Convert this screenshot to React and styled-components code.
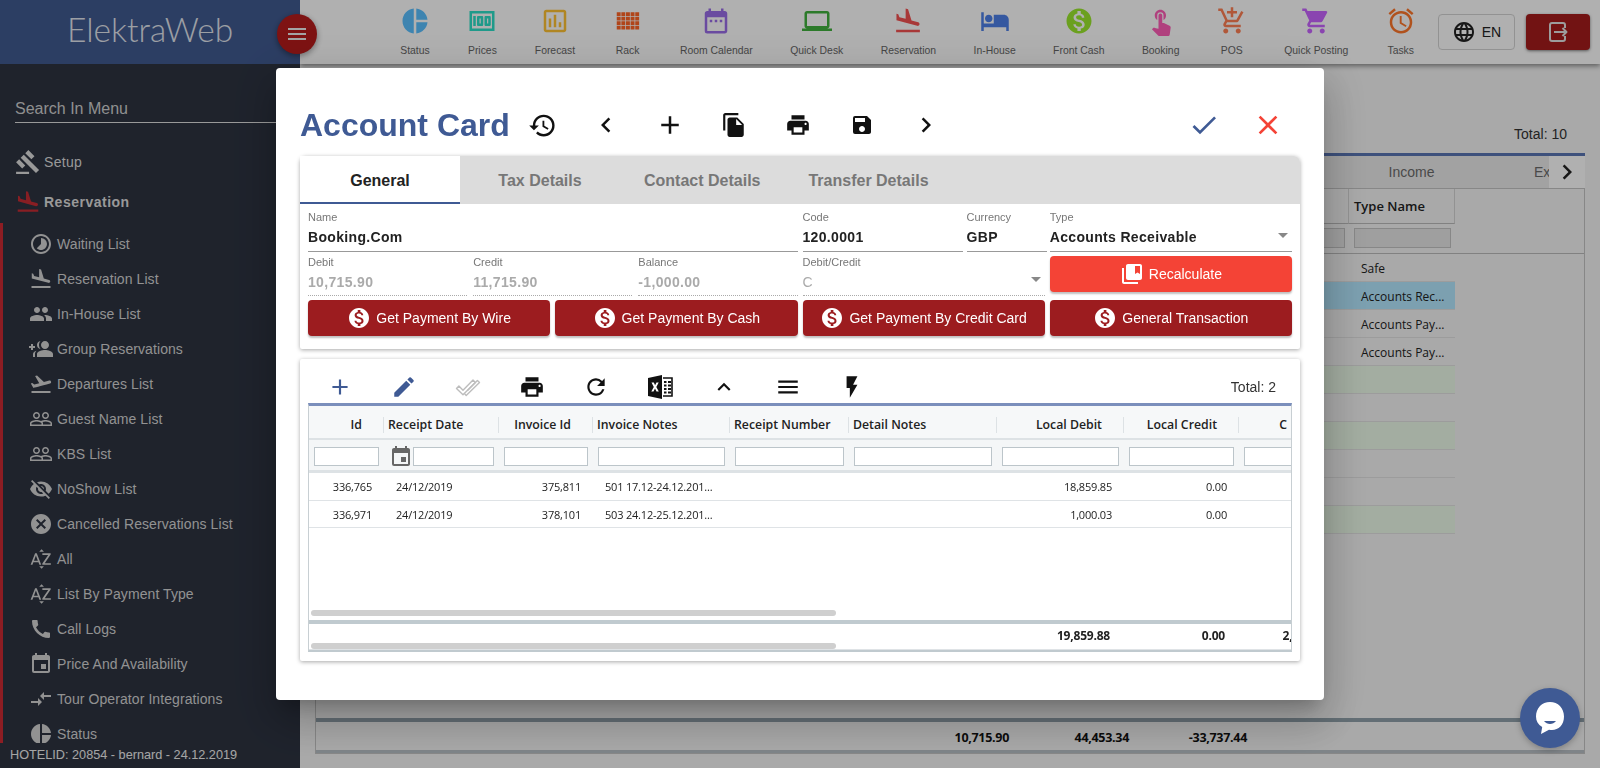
import styled, { createGlobalStyle } from 'styled-components';
import {
    MdHistory, MdChevronLeft, MdChevronRight, MdAdd, MdFileCopy, MdPrint, MdSave, MdCheck, MdClose,
    MdMonetizationOn, MdCollectionsBookmark, MdEdit, MdRefresh, MdKeyboardArrowUp, MdMenu, MdFlashOn, MdEvent,
    MdGavel, MdFlightLand, MdTimelapse, MdPeople, MdGroupAdd, MdFlightTakeoff, MdPeopleOutline, MdVisibilityOff,
    MdCancel, MdSortByAlpha, MdCall, MdCompareArrows, MdPieChart, MdMoney, MdOutlineAssessment,
    MdDateRange, MdLaptop, MdHotel, MdTouchApp, MdAddShoppingCart, MdShoppingCart, MdAccessAlarm, MdLanguage,
} from 'react-icons/md';

const GlobalStyle = createGlobalStyle`
    html, body { margin: 0; padding: 0; height: 100%; overflow: hidden; }
    body { font-family: "Liberation Sans", Arial, sans-serif; background: #f5f5f5; }
    * { box-sizing: border-box; }
`;

const MirroredGroupAdd = styled(MdGroupAdd)`
    transform: scaleX(-1);
`;

function RackIcon({ size }) {
    const cells = [];
    for (let row = 0; row < 4; row++) {
        for (let col = 0; col < 5; col++) {
            cells.push(<rect key={`${row}-${col}`} x={3 + col * 3.7} y={5 + row * 3.6} width="3.1" height="3" />);
        }
    }
    return <svg width={size} height={size} viewBox="0 0 24 24" fill="currentColor">{cells}</svg>;
}

function DoubleCheck() {
    return (
        <svg width="26" height="24" viewBox="0 0 26 24" fill="none" stroke="#bdbdbd" strokeWidth="1.4" strokeLinejoin="round">
            <path d="M1.5 13.5l2.4-2.4 4.1 4.1L18 5l2.4 2.4L8 19.800z" />
            <path d="M12.500 15.600l9.900-10.100 2.100 2.100L11.200 20.400l-1.600-1.600" />
        </svg>
    );
}

function ExcelIcon() {
    return (
        <svg width="26" height="26" viewBox="0 0 26 26">
            <path d="M1 4l14-3v24L1 22z" fill="#111" />
            <path d="M4.500 8.500h2.300l1.300 2.800 1.400-2.800h2.200l-2.400 4.400 2.500 4.600H9.500l-1.500-3-1.500 3H4.300l2.500-4.600z" fill="#fff" />
            <path d="M16 4h9v18h-9" fill="none" stroke="#111" strokeWidth="1.600" />
            <path d="M17 8h2.500M21 8h3M17 11.500h2.500M21 11.500h3M17 15h2.500M21 15h3M17 18.500h2.500M21 18.500h3" stroke="#111" strokeWidth="1.800" />
        </svg>
    );
}

function ExitIcon() {
    return (
        <svg width="24" height="24" viewBox="0 0 24 24" fill="none" stroke="#e4e4e4" strokeWidth="2" strokeLinejoin="round">
            <path d="M19 8V5a2 2 0 0 0-2-2H6a2 2 0 0 0-2 2v14a2 2 0 0 0 2 2h11a2 2 0 0 0 2-2v-3" />
            <path d="M8 12h12M16.500 8l4 4-4 4" />
        </svg>
    );
}

function ChatBubble() {
    return (
        <svg width="32" height="34" viewBox="0 0 32 34">
            <path d="M16 1c8 0 14 6 14 14.500S24.500 29 18 29c-1 0-2 0-3-.2L7 33l1.200-7C4 23.500 2 20 2 15.500 2 7 8 1 16 1z" fill="#fff" />
            <path d="M10 20c3 4 9 4 12 0z" fill="#3f5a94" />
        </svg>
    );
}

const shortcuts = [
    { label: 'Status', icon: MdPieChart, color: '#5ac0ff' },
    { label: 'Prices', icon: MdMoney, color: '#2de0c8' },
    { label: 'Forecast', icon: MdOutlineAssessment, color: '#ffc234' },
    { label: 'Rack', icon: RackIcon, color: '#ff6426' },
    { label: 'Room Calendar', icon: MdDateRange, color: '#9a6de8' },
    { label: 'Quick Desk', icon: MdLaptop, color: '#40b13d' },
    { label: 'Reservation', icon: MdFlightLand, color: '#f45151' },
    { label: 'In-House', icon: MdHotel, color: '#4d80e8' },
    { label: 'Front Cash', icon: MdMonetizationOn, color: '#9be82d' },
    { label: 'Booking', icon: MdTouchApp, color: '#ff5db7' },
    { label: 'POS', icon: MdAddShoppingCart, color: '#ff8054' },
    { label: 'Quick Posting', icon: MdShoppingCart, color: '#c864ff' },
    { label: 'Tasks', icon: MdAccessAlarm, color: '#ff772b' },
];

const subMenu = [
    { label: 'Waiting List', icon: MdTimelapse },
    { label: 'Reservation List', icon: MdFlightLand },
    { label: 'In-House List', icon: MdPeople },
    { label: 'Group Reservations', icon: MirroredGroupAdd },
    { label: 'Departures List', icon: MdFlightTakeoff },
    { label: 'Guest Name List', icon: MdPeopleOutline },
    { label: 'KBS List', icon: MdPeopleOutline },
    { label: 'NoShow List', icon: MdVisibilityOff },
    { label: 'Cancelled Reservations List', icon: MdCancel },
    { label: 'All', icon: MdSortByAlpha },
    { label: 'List By Payment Type', icon: MdSortByAlpha },
    { label: 'Call Logs', icon: MdCall },
    { label: 'Price And Availability', icon: MdEvent },
    { label: 'Tour Operator Integrations', icon: MdCompareArrows },
    { label: 'Status', icon: MdPieChart },
];

const columns = [
    { title: 'Id', right: true },
    { title: 'Receipt Date', date: true },
    { title: 'Invoice Id', right: true },
    { title: 'Invoice Notes' },
    { title: 'Receipt Number' },
    { title: 'Detail Notes' },
    { title: 'Local Debit', right: true },
    { title: 'Local Credit', right: true },
    { title: 'C', right: true, inset: 55 },
];

const transactions = [
    ['336,765', '24/12/2019', '375,811', '501 17.12-24.12.201...', '', '', '18,859.85', '0.00', ''],
    ['336,971', '24/12/2019', '378,101', '503 24.12-25.12.201...', '', '', '1,000.03', '0.00', ''],
];

const footerCells = ['', '', '', '', '', '', '19,859.88', '0.00', '2,000.03'];

const backRows = [
    { type: 'Safe' },
    { type: 'Accounts Rec...', tone: 'selected' },
    { type: 'Accounts Pay...' },
    { type: 'Accounts Pay...' },
    { tone: 'green' },
    {},
    { tone: 'green' },
    {},
    {},
    { tone: 'green' },
];

function App() {
    return (
        <>
            <GlobalStyle />
            <Page>
                <Sidebar>
                    <LogoBlock>
                        <Logo>ElektraWeb</Logo>
                        <MenuToggle><MdMenu size={24} /></MenuToggle>
                    </LogoBlock>
                    <SearchInput placeholder="Search In Menu" />
                    <TopItem>
                        <MdGavel size={26} />
                        <span>Setup</span>
                    </TopItem>
                    <TopItem $active>
                        <MdFlightLand size={26} />
                        <span>Reservation</span>
                    </TopItem>
                    <SubList>
                        {subMenu.map((item, i) => (
                            <SubItem key={i}>
                                <item.icon size={24} />
                                <span>{item.label}</span>
                            </SubItem>
                        ))}
                    </SubList>
                    <HotelInfo>HOTELID: 20854 - bernard - 24.12.2019</HotelInfo>
                </Sidebar>

                <MainColumn>
                    <Toolbar>
                        <ShortcutGroup>
                            {shortcuts.map((s) => (
                                <Shortcut key={s.label} $color={s.color}>
                                    <s.icon size={30} />
                                    <span>{s.label}</span>
                                </Shortcut>
                            ))}
                        </ShortcutGroup>
                        <ToolbarActions>
                            <LanguageButton><MdLanguage size={24} />EN</LanguageButton>
                            <LogoutButton><ExitIcon /></LogoutButton>
                        </ToolbarActions>
                    </Toolbar>
                    <Content>
                        <TotalText>Total: 10</TotalText>
                        <BackTabs>
                            <BackTab>Income</BackTab>
                            <BackTab $clipped>Expenses</BackTab>
                            <BackTabArrow><MdChevronRight size={30} /></BackTabArrow>
                        </BackTabs>
                        <BackGrid>
                            <BackHead>
                                <BackHeadCell />
                                <BackHeadCell>Type Name</BackHeadCell>
                            </BackHead>
                            <BackFilter>
                                <BackFilterCell><BackFilterInput $narrow /></BackFilterCell>
                                <BackFilterCell><BackFilterInput /></BackFilterCell>
                            </BackFilter>
                            <BackBody>
                                {backRows.map((r, i) => (
                                    <BackRow key={i} $tone={r.tone}>
                                        <span />
                                        <span>{r.type}</span>
                                    </BackRow>
                                ))}
                            </BackBody>
                            <BackFooter>
                                <span />
                                <span>10,715.90</span>
                                <span>44,453.34</span>
                                <span>-33,737.44</span>
                            </BackFooter>
                        </BackGrid>
                    </Content>
                </MainColumn>
            </Page>

            <Overlay>
                <Modal>
                    <TitleRow>
                        <Title>Account Card</Title>
                        <IconButton $size={29}><MdHistory /></IconButton>
                        <IconButton $size={30}><MdChevronLeft /></IconButton>
                        <IconButton $size={30}><MdAdd /></IconButton>
                        <IconButton><MdFileCopy /></IconButton>
                        <IconButton><MdPrint /></IconButton>
                        <IconButton $size={24}><MdSave /></IconButton>
                        <IconButton $size={30}><MdChevronRight /></IconButton>
                        <TitleActions>
                            <IconButton $size={32} $color="#3f5a94"><MdCheck /></IconButton>
                            <IconButton $size={32} $color="#f44336"><MdClose /></IconButton>
                        </TitleActions>
                    </TitleRow>

                    <Card>
                        <Tabs>
                            <Tab $active>General</Tab>
                            <Tab>Tax Details</Tab>
                            <Tab>Contact Details</Tab>
                            <Tab>Transfer Details</Tab>
                        </Tabs>
                        <FormGrid>
                            <Span2>
                                <Field>
                                    <label>Name</label>
                                    <FieldValue>Booking.Com</FieldValue>
                                </Field>
                            </Span2>
                            <CodeGroup>
                                <Field $width={160}>
                                    <label>Code</label>
                                    <FieldValue>120.0001</FieldValue>
                                </Field>
                                <Field $width={80}>
                                    <label>Currency</label>
                                    <FieldValue>GBP</FieldValue>
                                </Field>
                            </CodeGroup>
                            <Field>
                                <label>Type</label>
                                <FieldValue>Accounts Receivable</FieldValue>
                                <SelectArrow />
                            </Field>

                            <BalanceGroup>
                                <Field $disabled>
                                    <label>Debit</label>
                                    <FieldValue $disabled>10,715.90</FieldValue>
                                </Field>
                                <Field $disabled>
                                    <label>Credit</label>
                                    <FieldValue $disabled>11,715.90</FieldValue>
                                </Field>
                                <Field $disabled>
                                    <label>Balance</label>
                                    <FieldValue $disabled>-1,000.00</FieldValue>
                                </Field>
                            </BalanceGroup>
                            <Field $disabled>
                                <label>Debit/Credit</label>
                                <FieldValue $disabled $thin>C</FieldValue>
                                <SelectArrow />
                            </Field>
                            <ActionButton $bright>
                                <MdCollectionsBookmark size={24} />
                                Recalculate
                            </ActionButton>

                            <ActionButton><MdMonetizationOn size={24} />Get Payment By Wire</ActionButton>
                            <ActionButton><MdMonetizationOn size={24} />Get Payment By Cash</ActionButton>
                            <ActionButton><MdMonetizationOn size={24} />Get Payment By Credit Card</ActionButton>
                            <ActionButton><MdMonetizationOn size={24} />General Transaction</ActionButton>
                        </FormGrid>
                    </Card>

                    <GridCard>
                        <GridToolbar>
                            <IconButton $height={32} $color="#3f5a94"><MdAdd /></IconButton>
                            <IconButton $height={32} $color="#3f5a94"><MdEdit /></IconButton>
                            <IconButton $height={32}><DoubleCheck /></IconButton>
                            <IconButton $height={32}><MdPrint /></IconButton>
                            <IconButton $height={32}><MdRefresh /></IconButton>
                            <IconButton $height={32}><ExcelIcon /></IconButton>
                            <IconButton $height={32}><MdKeyboardArrowUp /></IconButton>
                            <IconButton $height={32}><MdMenu /></IconButton>
                            <IconButton $height={32}><MdFlashOn /></IconButton>
                            <GridTotal>Total: 2</GridTotal>
                        </GridToolbar>
                        <DataGrid>
                            <HeadRow>
                                {columns.map((c) => (
                                    <HeadCell key={c.title} $right={c.right} $inset={c.inset}>{c.title}</HeadCell>
                                ))}
                            </HeadRow>
                            <FilterRow>
                                {columns.map((c) => (
                                    <FilterCell key={c.title}>
                                        {c.date && <MdEvent size={24} />}
                                        <FilterInput />
                                    </FilterCell>
                                ))}
                            </FilterRow>
                            <GridBody>
                                {transactions.map((row) => (
                                    <DataRow key={row[0]}>
                                        {row.map((value, i) => (
                                            <DataCell key={i} $right={columns[i].right}>{value}</DataCell>
                                        ))}
                                    </DataRow>
                                ))}
                                <ScrollTrack><ScrollThumb /></ScrollTrack>
                            </GridBody>
                            <FooterRow>
                                {footerCells.map((value, i) => (
                                    <FooterCell key={i}>{value}</FooterCell>
                                ))}
                            </FooterRow>
                            <FooterScroll><ScrollThumb /></FooterScroll>
                        </DataGrid>
                    </GridCard>
                </Modal>
            </Overlay>

            <ChatButton><ChatBubble /></ChatButton>
        </>
    );
}

export default App;

const Page = styled.div`
    display: grid;
    grid-template-columns: 300px 1fr;
    width: 100%;
    height: 768px;
    overflow: hidden;
`;

const Sidebar = styled.aside`
    position: relative;
    display: flex;
    flex-direction: column;
    background: #2d3341;
    color: #dedede;
    overflow: hidden;
    z-index: 2;
`;

const LogoBlock = styled.div`
    flex: none;
    height: 64px;
    background: #405a90;
    display: flex;
    align-items: center;
    padding: 0 0 6px 67px;
`;

const Logo = styled.div`
    font-family: Lato, sans-serif;
    font-weight: 300;
    font-size: 33.5px;
    color: #fff;
    opacity: 0.85;
`;

const MenuToggle = styled.button`
    position: fixed;
    left: 277px;
    top: 14px;
    width: 40px;
    height: 40px;
    border: none;
    border-radius: 50%;
    background: #b71c1c;
    color: #eee;
    display: flex;
    align-items: center;
    justify-content: center;
    padding: 0;
    box-shadow: 0 2px 6px rgba(0, 0, 0, 0.4);
    z-index: 3;
`;

const SearchInput = styled.input`
    flex: none;
    margin: 32px 0 19px 15px;
    width: 280px;
    height: 27px;
    padding: 0;
    border: none;
    border-bottom: 1px solid #dedede;
    background: transparent;
    outline: none;
    font-family: "Liberation Sans", sans-serif;
    font-size: 16px;
    color: #d0d0d0;
    &::placeholder {
        color: #d0d0d0;
        opacity: 1;
    }
`;

const TopItem = styled.div`
    flex: none;
    height: 40px;
    display: flex;
    align-items: center;
    gap: 3px;
    padding-left: 15px;
    font-size: 14px;
    letter-spacing: ${(props) => (props.$active ? '0.5px' : '0.3px')};
    font-weight: ${(props) => (props.$active ? 700 : 400)};
    svg {
        color: ${(props) => (props.$active ? '#c62c34' : '#dedede')};
    }
`;

const SubList = styled.div`
    flex: none;
    margin-top: 1px;
    padding-top: 3px;
    border-left: 3px solid #cc2a33;
`;

const SubItem = styled.div`
    height: 35px;
    display: flex;
    align-items: center;
    gap: 4px;
    padding-left: 26px;
    font-size: 14px;
    letter-spacing: 0.08px;
    color: #d4d4d4;
    white-space: nowrap;
`;

const HotelInfo = styled.div`
    position: absolute;
    left: 0;
    right: 0;
    bottom: 0;
    height: 25px;
    padding-left: 10px;
    line-height: 25px;
    font-size: 12.7px;
    color: #f0f0f0;
    background: #2d3341;
`;

const MainColumn = styled.main`
    display: flex;
    flex-direction: column;
    min-width: 0;
`;

const Toolbar = styled.header`
    flex: none;
    height: 64px;
    display: flex;
    align-items: flex-start;
    justify-content: space-between;
    padding: 0 10px 0 100px;
    background: #fff;
    box-shadow: 0 2px 5px rgba(0, 0, 0, 0.45);
    z-index: 1;
`;

const ShortcutGroup = styled.div`
    display: flex;
    gap: 37.4px;
`;

const Shortcut = styled.div`
    flex: none;
    display: flex;
    flex-direction: column;
    align-items: center;
    padding-top: 6px;
    color: ${(props) => props.$color};
    span {
        margin-top: 8px;
        font-size: 10.4px;
        line-height: 14px;
        color: #666;
        white-space: nowrap;
    }
`;

const ToolbarActions = styled.div`
    flex: none;
    display: flex;
    gap: 11px;
    padding-top: 14px;
`;

const LanguageButton = styled.button`
    width: 77px;
    height: 36px;
    display: flex;
    align-items: center;
    justify-content: center;
    gap: 6px;
    border: 1px solid #d4d4d4;
    border-radius: 4px;
    background: transparent;
    font-family: "Liberation Sans", sans-serif;
    font-size: 14px;
    color: #222;
    padding: 0;
`;

const LogoutButton = styled.button`
    width: 64px;
    height: 36px;
    display: flex;
    align-items: center;
    justify-content: center;
    border: none;
    border-radius: 4px;
    background: #a51c1c;
    box-shadow: 0 1px 3px rgba(0, 0, 0, 0.5);
    padding: 0;
`;

const Content = styled.div`
    flex: 1;
    min-height: 0;
    display: flex;
    flex-direction: column;
    padding: 56px 15px 14px;
`;

const TotalText = styled.div`
    flex: none;
    height: 33px;
    line-height: 28px;
    padding-right: 18px;
    text-align: right;
    font-size: 14px;
    color: #333;
`;

const BackTabs = styled.div`
    flex: none;
    height: 35px;
    display: flex;
    justify-content: flex-end;
    border-top: 3px solid #5a76b4;
    background: #ebebeb;
`;

const BackTab = styled.div`
    width: ${(props) => (props.$clipped ? '61px' : '153px')};
    padding-left: ${(props) => (props.$clipped ? '46px' : '0')};
    text-align: ${(props) => (props.$clipped ? 'left' : 'center')};
    line-height: 32px;
    font-size: 14px;
    color: #6b6b6b;
    white-space: nowrap;
    overflow: hidden;
`;

const BackTabArrow = styled.div`
    width: 36px;
    display: flex;
    align-items: center;
    justify-content: center;
    background: #fff;
    color: #222;
`;

const BackGrid = styled.div`
    flex: 1;
    min-height: 0;
    display: flex;
    flex-direction: column;
    border: 1px solid #c4c4c4;
    border-top: none;
    font-family: "Open Sans", sans-serif;
`;

const backColumns = '1033px 106px';

const BackHead = styled.div`
    flex: none;
    height: 35px;
    display: grid;
    grid-template-columns: ${backColumns};
    border-top: 1px solid #c4c4c4;
`;

const BackHeadCell = styled.div`
    border-right: 1px solid #d4d4d4;
    border-bottom: 1px solid #bcbcbc;
    padding-left: 5px;
    line-height: 34px;
    font-size: 13px;
    font-weight: 600;
    color: #222;
`;

const BackFilter = styled.div`
    flex: none;
    height: 31px;
    display: grid;
    grid-template-columns: ${backColumns};
    border-bottom: 1px solid #bcbcbc;
    width: 100%;
`;

const BackFilterCell = styled.div`
    display: flex;
    justify-content: flex-end;
    padding: 5px 4px 4px 5px;
`;

const BackFilterInput = styled.div`
    flex: ${(props) => (props.$narrow ? '0 0 200px' : 1)};
    height: 20px;
    border: 1px solid #c4c4c4;
    background: #e6e6e6;
`;

const BackBody = styled.div`
    flex: 1;
    min-height: 0;
`;

const BackRow = styled.div`
    height: 28px;
    width: 1139px;
    display: grid;
    grid-template-columns: ${backColumns};
    align-items: center;
    padding-top: 2px;
    font-size: 12px;
    color: #222;
    background: ${(props) => (props.$tone === 'selected' ? '#b4e8ff' : props.$tone === 'green' ? '#ecfbe9' : 'transparent')};
    border-bottom: 1px solid #e2e2e2;
    span:last-child {
        padding-left: 12px;
    }
`;

const BackFooter = styled.div`
    flex: none;
    height: 35px;
    display: grid;
    grid-template-columns: 573px 120px 120px 118px;
    align-items: center;
    padding-top: 3px;
    border-top: 4px solid #90a0aa;
    border-bottom: 3px solid #b8c0c6;
    font-size: 12.5px;
    font-weight: 700;
    color: #111;
    letter-spacing: -0.3px;
    span {
        text-align: right;
    }
`;

const Overlay = styled.div`
    position: fixed;
    inset: 0;
    display: flex;
    align-items: center;
    justify-content: center;
    background: rgba(0, 0, 0, 0.31);
    z-index: 5;
`;

const Modal = styled.section`
    width: 1048px;
    height: 632px;
    display: flex;
    flex-direction: column;
    padding: 32px 24px 0;
    background: #fff;
    border-radius: 4px;
    box-shadow: 0 11px 15px -7px rgba(0, 0, 0, 0.2), 0 24px 38px 3px rgba(0, 0, 0, 0.14), 0 9px 46px 8px rgba(0, 0, 0, 0.12);
`;

const TitleRow = styled.div`
    flex: none;
    height: 50px;
    display: flex;
    align-items: center;
    margin-bottom: 6px;
`;

const Title = styled.h1`
    margin: 0;
    width: 210px;
    font-size: 32px;
    font-weight: 700;
    color: #3f5a94;
    white-space: nowrap;
`;

const IconButton = styled.div`
    flex: none;
    width: 64px;
    height: ${(props) => props.$height || 50}px;
    display: flex;
    align-items: center;
    justify-content: center;
    color: ${(props) => props.$color || '#111'};
    svg {
        width: ${(props) => props.$size || 26}px;
        height: ${(props) => props.$size || 26}px;
    }
`;

const TitleActions = styled.div`
    margin-left: auto;
    display: flex;
`;

const Card = styled.div`
    flex: none;
    height: 193px;
    background: #fff;
    border-radius: 6px 6px 2px 2px;
    box-shadow: 0 1px 4px rgba(0, 0, 0, 0.35);
    margin-bottom: 10px;
`;

const Tabs = styled.div`
    height: 48px;
    display: flex;
    background: #dcdcdc;
    border-radius: 6px 6px 0 0;
`;

const Tab = styled.div`
    min-width: 160px;
    padding: 0 24px;
    text-align: center;
    line-height: 49px;
    font-size: 16px;
    font-weight: 700;
    color: ${(props) => (props.$active ? '#222' : '#777')};
    background: ${(props) => (props.$active ? '#fff' : 'transparent')};
    border-bottom: 2px solid ${(props) => (props.$active ? '#3f5a94' : 'transparent')};
`;

const FormGrid = styled.div`
    display: grid;
    grid-template-columns: repeat(4, minmax(0, 1fr));
    grid-template-rows: 41px 40px 36px;
    row-gap: 4px;
    column-gap: 5px;
    padding: 7px 8px 0;
`;

const Span2 = styled.div`
    grid-column: span 2;
    display: flex;
    flex-direction: column;
`;

const CodeGroup = styled.div`
    display: flex;
    gap: 4px;
`;

const BalanceGroup = styled.div`
    grid-column: span 2;
    display: grid;
    grid-template-columns: repeat(3, 1fr);
    gap: 6px;
`;

const Field = styled.div`
    position: relative;
    flex: ${(props) => (props.$width ? `0 0 ${props.$width}px` : 1)};
    display: flex;
    flex-direction: column;
    border-bottom: 1px ${(props) => (props.$disabled ? 'dotted #aaa' : 'solid #999')};
    label {
        font-size: 11px;
        line-height: 13px;
        color: #777;
    }
`;

const FieldValue = styled.div`
    margin-top: 4px;
    font-size: 14px;
    line-height: 18px;
    letter-spacing: 0.33px;
    font-weight: ${(props) => (props.$thin ? 400 : 700)};
    color: ${(props) => (props.$disabled ? '#aaa' : '#222')};
`;

const SelectArrow = styled.i`
    position: absolute;
    right: 4px;
    bottom: 13px;
    border-left: 5px solid transparent;
    border-right: 5px solid transparent;
    border-top: 5px solid #888;
`;

const ActionButton = styled.button`
    height: 36px;
    display: flex;
    align-items: center;
    justify-content: center;
    gap: 5px;
    padding: 0;
    border: none;
    border-radius: 4px;
    background: ${(props) => (props.$bright ? '#f44336' : '#9c1c1f')};
    color: #fff;
    font-family: "Liberation Sans", sans-serif;
    font-size: 14px;
    box-shadow: 0 2px 2px rgba(0, 0, 0, 0.25);
`;

const GridCard = styled.div`
    flex: none;
    height: 302px;
    display: flex;
    flex-direction: column;
    padding: 0 8px;
    background: #fff;
    border-radius: 2px;
    box-shadow: 0 1px 4px rgba(0, 0, 0, 0.35);
`;

const GridToolbar = styled.div`
    flex: none;
    height: 44px;
    padding-top: 12px;
    display: flex;
    align-items: center;
`;

const GridTotal = styled.div`
    margin-left: auto;
    padding-right: 16px;
    font-size: 14px;
    color: #333;
`;

const gridColumns = '75px 115px 94px 137px 119px 148px 127px 115px 104px';

const DataGrid = styled.div`
    flex: none;
    height: 249px;
    display: flex;
    flex-direction: column;
    overflow: hidden;
    border-top: 3px solid #7b8fbc;
    border-left: 1px solid #c8cfd3;
    border-right: 1px solid #c8cfd3;
    border-bottom: 2px solid #c0cacf;
    font-family: "Open Sans", sans-serif;
    color: #222;
`;

const HeadRow = styled.div`
    flex: none;
    height: 34px;
    display: grid;
    grid-template-columns: ${gridColumns};
    width: max-content;
    min-width: 100%;
    background: #f6f8f9;
    border-bottom: 2px solid #dde2e5;
    padding-top: 11px;
`;

const HeadCell = styled.div`
    height: 16px;
    padding: 0 ${(props) => (props.$right ? `${props.$inset || 21}px` : '4px')} 0 4px;
    border-right: 1px solid #dde2e5;
    text-align: ${(props) => (props.$right ? 'right' : 'left')};
    line-height: 16px;
    font-size: 12.3px;
    font-weight: 600;
    white-space: nowrap;
`;

const FilterRow = styled.div`
    flex: none;
    height: 33px;
    display: grid;
    grid-template-columns: ${gridColumns};
    width: max-content;
    min-width: 100%;
    background: #f4f6f7;
    border-bottom: 3px solid #dde2e5;
`;

const FilterCell = styled.div`
    display: flex;
    align-items: center;
    padding: 3px 5px 0 5px;
    color: #666;
    svg {
        flex: none;
    }
`;

const FilterInput = styled.div`
    flex: 1;
    height: 19px;
    background: #fff;
    border: 1px solid #bcc5ca;
`;

const GridBody = styled.div`
    flex: 1;
    min-height: 0;
    display: flex;
    flex-direction: column;
`;

const DataRow = styled.div`
    flex: none;
    height: 27.5px;
    display: grid;
    grid-template-columns: ${gridColumns};
    width: max-content;
    min-width: 100%;
    padding-top: 1px;
    border-bottom: 1px solid #dfe3e6;
    align-items: center;
`;

const DataCell = styled.div`
    padding: 0 12px;
    text-align: ${(props) => (props.$right ? 'right' : 'left')};
    font-size: 11px;
    letter-spacing: -0.2px;
    white-space: nowrap;
    overflow: hidden;
`;

const ScrollTrack = styled.div`
    margin-top: auto;
    height: 10px;
    padding: 0 0 4px 2px;
    flex: none;
`;

const ScrollThumb = styled.div`
    width: 525px;
    height: 6px;
    border-radius: 3px;
    background: #cfcfcf;
`;

const FooterRow = styled.div`
    flex: none;
    height: 23px;
    display: grid;
    grid-template-columns: ${gridColumns};
    width: max-content;
    align-items: center;
    border-top: 4px solid #c0cacf;
`;

const FooterCell = styled.div`
    padding: 3px 14px 0 12px;
    text-align: right;
    font-size: 12px;
    font-weight: 700;
    letter-spacing: -0.2px;
    white-space: nowrap;
`;

const FooterScroll = styled.div`
    flex: none;
    height: 7px;
    padding-left: 2px;
    border-bottom: 1px solid #dfe3e6;
`;

const ChatButton = styled.div`
    position: fixed;
    right: 20px;
    bottom: 20px;
    width: 60px;
    height: 60px;
    border-radius: 50%;
    background: #3f5a94;
    display: flex;
    align-items: center;
    justify-content: center;
    box-shadow: 0 2px 6px rgba(0, 0, 0, 0.25);
    z-index: 6;
`;
